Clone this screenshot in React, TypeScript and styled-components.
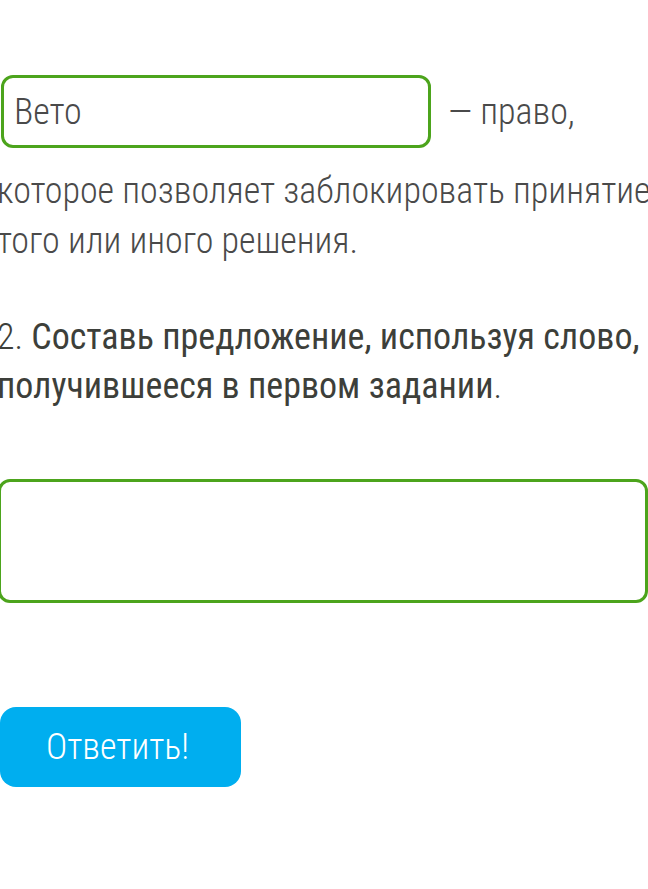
import styled, { createGlobalStyle } from "styled-components";

const Global = createGlobalStyle`
  body {
    margin: 0;
    background: #ffffff;
    font-family: "Roboto Condensed", Roboto, sans-serif;
  }
`;

const Page = styled.div`
  width: 652px;
  margin-left: -3px;
  padding-top: 75px;
  display: flex;
  flex-direction: column;
`;

const AnswerRow = styled.div`
  display: flex;
  align-items: center;
  gap: 17px;
  margin-left: 4px;
`;

const WordBox = styled.div`
  box-sizing: border-box;
  width: 430px;
  height: 73px;
  border: 3px solid #4ca41c;
  border-radius: 12px;
  padding-left: 10px;
  display: flex;
  align-items: center;
  font-size: 36px;
  font-weight: 300;
  color: #4a4a4a;
`;

const Text = styled.p`
  margin: 0;
  font-size: 36px;
  font-weight: 300;
  line-height: 50px;
  color: #4a4a4a;
  white-space: nowrap;
`;

const Definition = styled(Text)`
  margin-top: 18px;
`;

const Question = styled(Text)`
  margin-top: 47px;
  line-height: 49px;
  color: #3d3f3a;

  strong {
    font-weight: 400;
  }
`;

const SentenceBox = styled.div`
  box-sizing: border-box;
  width: 650px;
  height: 124px;
  margin: 68px 0 0 1px;
  border: 3px solid #4ca41c;
  border-radius: 12px;
`;

const SubmitButton = styled.button`
  width: 241px;
  height: 80px;
  margin: 104px 0 0 3px;
  border: none;
  border-radius: 16px;
  background: #00aeef;
  color: #ffffff;
  font-family: "Roboto Condensed", Roboto, sans-serif;
  font-size: 36px;
  font-weight: 300;
  cursor: pointer;
  padding: 0 6px 0 0;
`;

const App = () => (
  <>
    <Global />
    <Page>
      <AnswerRow>
        <WordBox>Вето</WordBox>
        <Text as="span">— право,</Text>
      </AnswerRow>
      <Definition>
        которое позволяет заблокировать принятие
        <br />
        того или иного решения.
      </Definition>
      <Question>
        2. <strong>Составь предложение, используя слово,</strong>
        <br />
        <strong>получившееся в первом задании</strong>.
      </Question>
      <SentenceBox />
      <SubmitButton>Ответить!</SubmitButton>
    </Page>
  </>
);

export default App;
